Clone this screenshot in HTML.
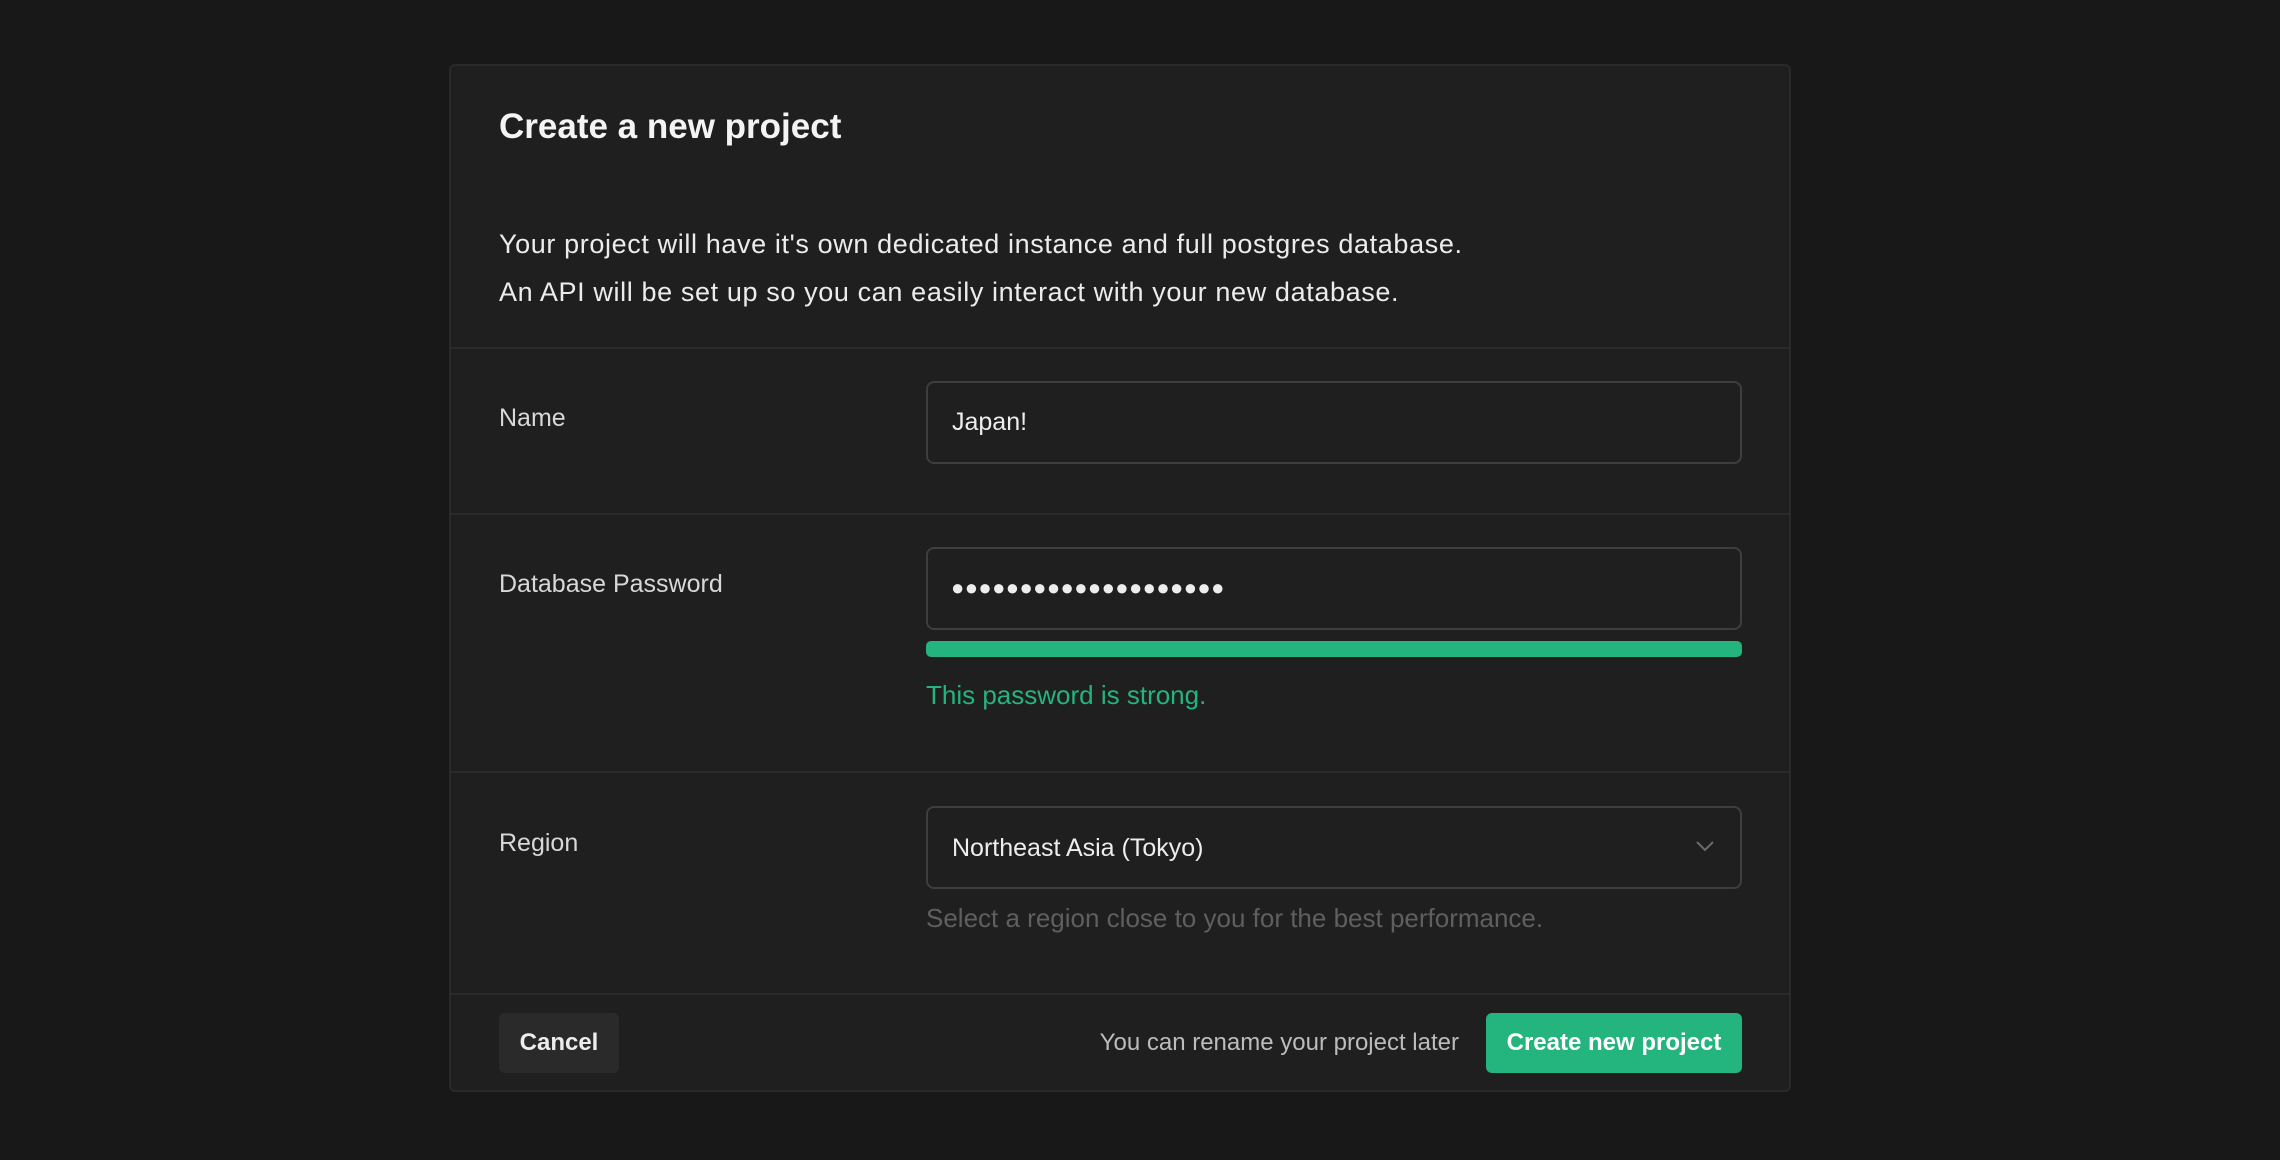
<!DOCTYPE html>
<html><head><style>
*{box-sizing:border-box;margin:0;padding:0}
body{width:2280px;height:1160px;background:#181818;font-family:"Liberation Sans",sans-serif;color:#ededed;position:relative;overflow:hidden}
.card{position:absolute;left:449px;top:64px;width:1342px;height:1028px;background:#1f1f1f;border:2px solid #2a2a2a;border-radius:6px}
.t{position:absolute;white-space:nowrap}
.hr{position:absolute;left:0;right:0;height:2px;background:#2a2a2a}
.inp{position:absolute;left:475px;width:816px;height:83px;border:2px solid #3e3e3e;border-radius:8px;background:#1f1f1f}
.btn{position:absolute;border-radius:6px;display:flex;align-items:center;justify-content:center;font-size:24px;font-weight:bold}
</style></head><body>
<div class="card">
<div class="t" style="left:48px;top:41px;font-size:35px;font-weight:bold;color:#f4f4f4">Create a new project</div>
<div class="t" style="left:48px;top:163px;font-size:27px;letter-spacing:0.62px;color:#ececec">Your project will have it's own dedicated instance and full postgres database.</div>
<div class="t" style="left:48px;top:211px;font-size:27px;letter-spacing:0.62px;color:#ececec">An API will be set up so you can easily interact with your new database.</div>
<div class="hr" style="top:281px"></div>
<div class="t" style="left:48px;top:338px;font-size:25px;color:#d8d8d8">Name</div>
<div class="inp" style="top:315px"></div>
<div class="t" style="left:501px;top:342px;font-size:25px">Japan!</div>
<div class="hr" style="top:447px"></div>
<div class="t" style="left:48px;top:504px;font-size:25px;color:#d8d8d8">Database Password</div>
<div class="inp" style="top:481px"></div>
<div class="t" style="left:500px;top:509px;font-size:22px;letter-spacing:0.4px">●●●●●●●●●●●●●●●●●●●●</div>
<div style="position:absolute;left:475px;top:575px;width:816px;height:16px;border-radius:5px;background:#24b47e"></div>
<div class="t" style="left:475px;top:614px;font-size:26px;color:#24b47e">This password is strong.</div>
<div class="hr" style="top:705px"></div>
<div class="t" style="left:48px;top:763px;font-size:25px;color:#d8d8d8">Region</div>
<div class="inp" style="top:740px"></div>
<div class="t" style="left:501px;top:768px;font-size:25px">Northeast Asia (Tokyo)</div>
<svg style="position:absolute;left:1243px;top:773px" width="22" height="14" viewBox="0 0 22 14"><path d="M3 3l8 8 8-8" fill="none" stroke="#6a6a6a" stroke-width="2"/></svg>
<div class="t" style="left:475px;top:837px;font-size:26px;color:#5f5f5f">Select a region close to you for the best performance.</div>
<div class="hr" style="top:927px"></div>
<div class="btn" style="left:48px;top:947px;width:120px;height:60px;background:#2a2a2a;color:#ededed">Cancel</div>
<div class="t" style="right:330px;top:963px;font-size:24px;color:#bcbcbc">You can rename your project later</div>
<div class="btn" style="left:1035px;top:947px;width:256px;height:60px;background:#24b47e;color:#fff">Create new project</div>
</div>
</body></html>
